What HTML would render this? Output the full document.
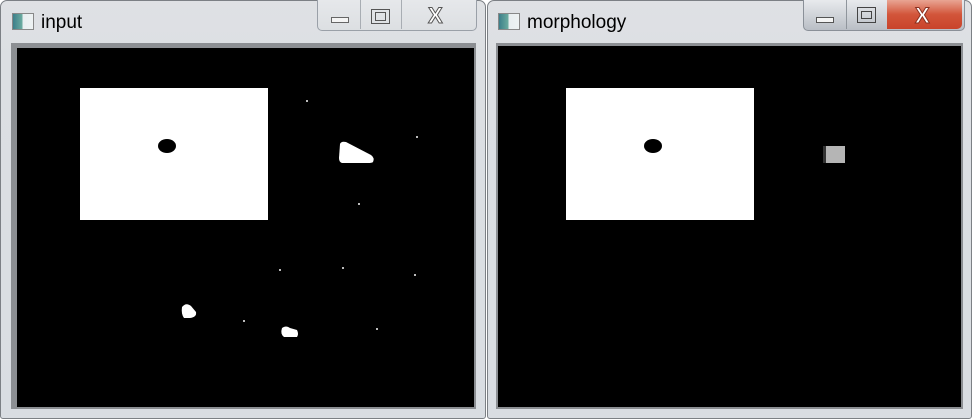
<!DOCTYPE html>
<html><head><style>
body{margin:0;width:972px;height:419px;background:#fff;position:relative;overflow:hidden;font-family:"Liberation Sans",sans-serif}
.a{position:absolute}
.win{background:linear-gradient(#dfe1e4,#dcdfe3 60px,#d9dde2);border:1px solid #7c8085;border-radius:7px 7px 3px 3px;box-sizing:border-box}
.title{font-size:19px;color:#000;top:12px}
.icon{width:20px;height:15px;border:1px solid #888;background:linear-gradient(90deg,#3d7f8a,#6aaa9f 45%,#e8eef0 50%,#eef2f3);top:13px}
.dot{background:#bbb;width:2px;height:2px}
</style></head><body>
<!-- left window -->
<div class="a win" style="left:0;top:0;width:486px;height:419px"></div>
<div class="a icon" style="left:12px"></div>
<div class="a title" style="left:41px">input</div>
<div class="a" style="left:317px;top:0;width:158px;height:30px;border:1px solid #9aa0a8;border-top:none;border-radius:0 0 5px 5px;background:linear-gradient(#e6e8eb,#dcdfe2)"></div>
<div class="a" style="left:360px;top:0;width:1px;height:29px;background:#a8adb3"></div>
<div class="a" style="left:401px;top:0;width:1px;height:29px;background:#a8adb3"></div>
<div class="a" style="left:331px;top:17px;width:16px;height:4px;border:1px solid #666;background:#f4f4f4"></div>
<div class="a" style="left:371px;top:9px;width:17px;height:13px;border:1px solid #555"></div>
<div class="a" style="left:375px;top:12px;width:9px;height:7px;border:1px solid #555"></div>
<div class="a" style="left:428px;top:3px;font-size:22px;color:#fff;-webkit-text-stroke:1px #555;font-weight:bold">X</div>
<div class="a" style="left:11px;top:43px;width:465px;height:366px;background:#8c8f93"></div>
<div class="a" style="left:17px;top:48px;width:457px;height:359px;background:#000"></div>
<div class="a" style="left:80px;top:88px;width:188px;height:132px;background:#fff"></div>
<div class="a" style="left:158px;top:139px;width:18px;height:14px;border-radius:50%;background:#000"></div>
<svg class="a" style="left:0;top:0" width="486" height="419"><path d="M340 144 Q341 141 346 142 L371 155 Q375 158 373 162 Q372 163 368 163 L342 163 Q339 162 339 158 Z" fill="#fff"/>
<path d="M182 307 Q186 302 191 306 L196 312 Q197 317 190 318 L184 318 Q181 314 182 307Z" fill="#fff"/>
<path d="M282 328 Q286 325 290 328 L297 330 Q299 334 297 337 L284 337 Q280 334 282 328Z" fill="#fff"/></svg>
<div class="a dot" style="left:306px;top:100px"></div>
<div class="a dot" style="left:416px;top:136px"></div>
<div class="a dot" style="left:358px;top:203px"></div>
<div class="a dot" style="left:279px;top:269px"></div>
<div class="a dot" style="left:342px;top:267px"></div>
<div class="a dot" style="left:414px;top:274px"></div>
<div class="a dot" style="left:243px;top:320px"></div>
<div class="a dot" style="left:376px;top:328px"></div>
<!-- right window -->
<div class="a win" style="left:487px;top:0;width:485px;height:419px"></div>
<div class="a icon" style="left:498px"></div>
<div class="a title" style="left:527px">morphology</div>
<div class="a" style="left:803px;top:0;width:160px;height:30px;border:1px solid #8a9098;border-top:none;border-radius:0 0 5px 5px;background:linear-gradient(#e8eaed,#b9bec5)"></div>
<div class="a" style="left:846px;top:0;width:1px;height:29px;background:#8f959c"></div>
<div class="a" style="left:887px;top:0;width:75px;height:29px;border-radius:0 0 5px 0;background:linear-gradient(#e9a593,#d2553a 50%,#c9432a)"></div>
<div class="a" style="left:816px;top:17px;width:16px;height:4px;border:1px solid #555;background:#f4f4f4"></div>
<div class="a" style="left:857px;top:7px;width:17px;height:14px;border:1px solid #444"></div>
<div class="a" style="left:861px;top:11px;width:9px;height:6px;border:1px solid #444"></div>
<div class="a" style="left:915px;top:3px;font-size:22px;color:#fff;font-weight:bold;-webkit-text-stroke:1px #8a3020">X</div>
<div class="a" style="left:496px;top:43px;width:467px;height:366px;background:#8c8f93"></div>
<div class="a" style="left:498px;top:46px;width:463px;height:361px;background:#000"></div>
<div class="a" style="left:566px;top:88px;width:188px;height:132px;background:#fff"></div>
<div class="a" style="left:644px;top:139px;width:18px;height:14px;border-radius:50%;background:#000"></div>
<div class="a" style="left:823px;top:146px;width:3px;height:17px;background:#333"></div>
<div class="a" style="left:826px;top:146px;width:19px;height:17px;background:#b5b5b5"></div>
</body></html>
